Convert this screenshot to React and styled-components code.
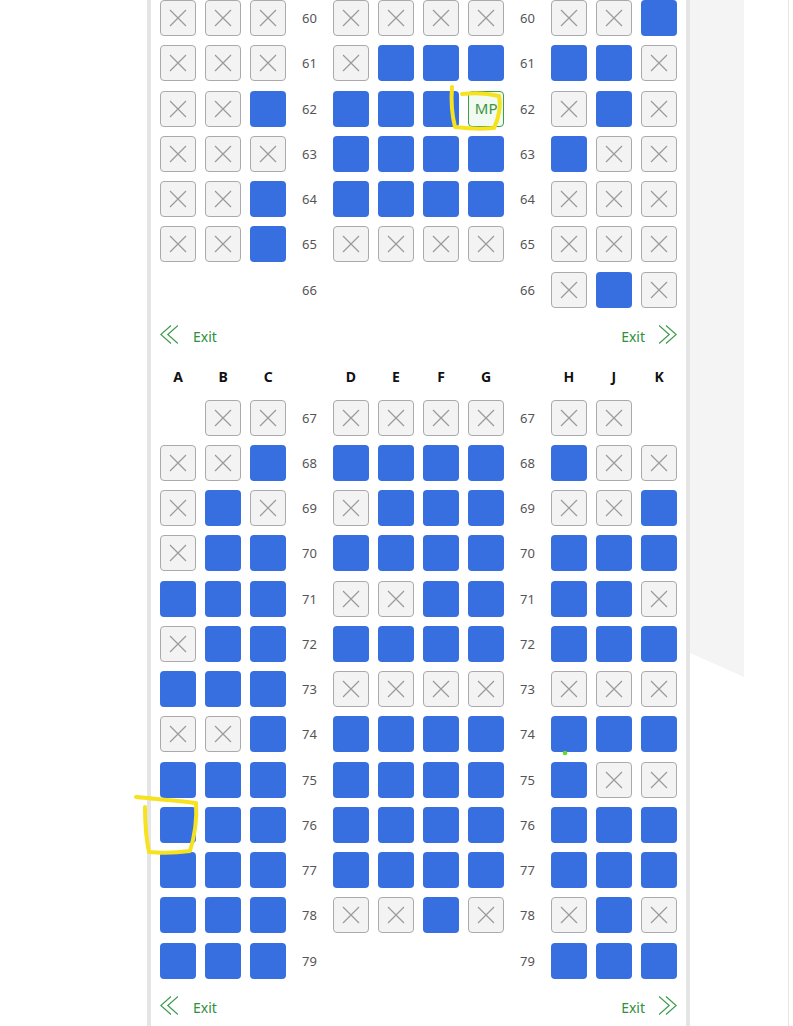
import React from "react";
import styled, { createGlobalStyle } from "styled-components";

const GlobalStyle = createGlobalStyle`
  html, body { margin: 0; padding: 0; background: #ffffff; overflow: hidden; }
  body { font-family: "Noto Sans", "Open Sans", Arial, sans-serif; }
`;

const Root = styled.div`
  position: relative;
  width: 793px;
  height: 1026px;
  overflow: hidden;
`;

const Page = styled.div`
  display: flex;
  align-items: flex-start;
  padding-left: 147px;
  height: 100%;
`;

const Cabin = styled.div`
  box-sizing: border-box;
  flex: 0 0 543px;
  border-left: 4px solid #e5e5e5;
  border-right: 4px solid #e5e5e5;
  padding: 0 9px;
  align-self: stretch;
  display: flex;
  flex-direction: column;
`;

const SidePanel = styled.div`
  flex: 0 0 54px;
  height: 677px;
  background: #f4f4f4;
  clip-path: polygon(0 0, 100% 0, 100% 100%, 0 653px);
`;

const Filler = styled.div`
  flex: 0 0 44px;
  align-self: stretch;
  border-right: 1px solid #e6e6e6;
`;

const Section = styled.div`
  display: flex;
  flex-direction: column;
  gap: 9.25px;
  margin-top: ${(p) => p.$top}px;
`;

const SeatRow = styled.div`
  display: grid;
  grid-template-columns: repeat(3, 36px) 28.5px repeat(4, 36px) 28.5px repeat(3, 36px);
  column-gap: 9.1px;
  height: ${(p) => (p.$header ? 20 : 36)}px;
  margin-top: ${(p) => p.$top || 0}px;
`;

const Seat = styled.div`
  box-sizing: border-box;
  width: 36px;
  height: 36px;
  border-radius: 4px;
  display: flex;
  align-items: center;
  justify-content: center;
  ${(p) => p.$state === "o" && `background: #386fe0;`}
  ${(p) => p.$state === "x" && `background: #f3f3f3; border: 1px solid #aaaaaa;`}
  ${(p) =>
    p.$state === "m" &&
    `background: #f2fbf2; border: 1px solid #3f9c48; color: #3a9444; font-size: 15px; line-height: 1;`}
`;

const RowNumber = styled.div`
  display: flex;
  align-items: center;
  justify-content: center;
  font-size: 13px;
  color: #555555;
`;

const ColLetter = styled.div`
  display: flex;
  align-items: center;
  justify-content: center;
  font-size: 14px;
  font-weight: 700;
  color: #111111;
`;

const ExitRow = styled.div`
  display: flex;
  justify-content: space-between;
  align-items: center;
  height: 28px;
  margin-top: ${(p) => p.$top}px;
`;

const ExitMark = styled.div`
  display: flex;
  align-items: center;
  gap: ${(p) => p.$gap}px;
  color: #2f8f3c;
  font-size: 14px;
`;

const ExitLabel = styled.span`
  position: relative;
  top: 2px;
`;

const Overlay = styled.svg`
  position: absolute;
  left: 0;
  top: 0;
  pointer-events: none;
`;

const Cross = () => (
  <svg width="18" height="18" viewBox="0 0 18 18">
    <path d="M1 1 L17 17 M17 1 L1 17" stroke="#9a9a9a" strokeWidth="1.2" fill="none" />
  </svg>
);

const Chevrons = ({ dir }) => (
  <svg width="18" height="19" viewBox="0 0 18 19">
    <g
      fill="none"
      stroke="#3c9a4c"
      strokeWidth="1.2"
      transform={dir === "right" ? "translate(18 0) scale(-1 1)" : undefined}
    >
      <polyline points="11,0.5 0.8,9.5 11,18.5" />
      <polyline points="18,0.5 7.8,9.5 18,18.5" />
    </g>
  </svg>
);

const upper = {
  60: "xxx xxxx xxo",
  61: "xxx xooo oox",
  62: "xxo ooom xox",
  63: "xxx oooo oxx",
  64: "xxo oooo xxx",
  65: "xxo xxxx xxx",
  66: "--- ---- xox",
};

const lower = {
  67: "-xx xxxx xx-",
  68: "xxo oooo oxx",
  69: "xox xooo xxo",
  70: "xoo oooo ooo",
  71: "ooo xxoo oox",
  72: "xoo oooo ooo",
  73: "ooo xxxx xxx",
  74: "xxo oooo ooo",
  75: "ooo oooo oxx",
  76: "ooo oooo ooo",
  77: "ooo oooo ooo",
  78: "ooo xxox xox",
  79: "ooo ---- ooo",
};

const renderSeat = (s, key) => {
  if (s === "-") return <div key={key} />;
  return (
    <Seat key={key} $state={s}>
      {s === "x" && <Cross />}
      {s === "m" && "MP"}
    </Seat>
  );
};

const Row = ({ num, layout }) => {
  const [left, mid, right] = layout.split(" ");
  return (
    <SeatRow>
      {left.split("").map((s, i) => renderSeat(s, "l" + i))}
      <RowNumber>{num}</RowNumber>
      {mid.split("").map((s, i) => renderSeat(s, "m" + i))}
      <RowNumber>{num}</RowNumber>
      {right.split("").map((s, i) => renderSeat(s, "r" + i))}
    </SeatRow>
  );
};

const Exit = ({ top }) => (
  <ExitRow $top={top}>
    <ExitMark $gap={15}>
      <Chevrons dir="left" />
      <ExitLabel>Exit</ExitLabel>
    </ExitMark>
    <ExitMark $gap={14}>
      <ExitLabel>Exit</ExitLabel>
      <Chevrons dir="right" />
    </ExitMark>
  </ExitRow>
);

const letters = ["A", "B", "C", "", "D", "E", "F", "G", "", "H", "J", "K"];

export default function App() {
  return (
    <Root>
      <GlobalStyle />
      <Page>
        <Cabin>
          <Section $top={0}>
            {Object.entries(upper).map(([n, l]) => (
              <Row key={n} num={n} layout={l} />
            ))}
          </Section>
          <Exit top={13} />
          <SeatRow $header $top={18}>
            {letters.map((c, i) => (
              <ColLetter key={i}>{c}</ColLetter>
            ))}
          </SeatRow>
          <Section $top={13}>
            {Object.entries(lower).map(([n, l]) => (
              <Row key={n} num={n} layout={l} />
            ))}
          </Section>
          <Exit top={13} />
        </Cabin>
        <SidePanel />
        <Filler />
      </Page>
      <Overlay width="793" height="1026" viewBox="0 0 793 1026">
        <g fill="none" stroke="#f7e21f" strokeWidth="4" strokeLinecap="round" strokeLinejoin="round">
          <path d="M452 87 C451 100 452 115 455 127 C470 129 485 129 494 128 C499 118 501 105 499 96 C487 93 472 93 462 94" />
          <path d="M136 797 C156 799 180 801 196 803 C197 818 195 835 190 851 C175 853 160 853 149 852 C146 838 145 822 145 807" />
        </g>
        <circle cx="565" cy="753" r="2.3" fill="#5ddc2a" />
      </Overlay>
    </Root>
  );
}
